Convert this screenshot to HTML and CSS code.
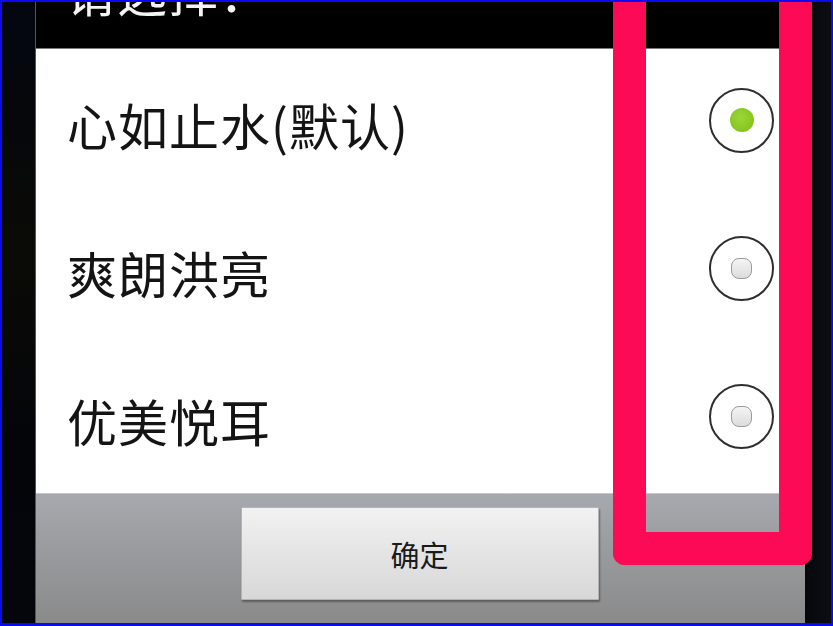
FILE: index.html
```html
<!DOCTYPE html>
<html lang="zh-CN">
<head>
<meta charset="utf-8">
<title>请选择</title>
<link rel="stylesheet" href="styles.css">
</head>
<body>
<div class="screen">
  <div class="side side-left"></div>
  <div class="dialog">
    <div class="title-bar"><div class="title">请选择：</div></div>
    <div class="list">
      <div class="item">
        <span class="label">心如止水(默认)</span>
        <span class="radio checked"><span class="dot"></span></span>
      </div>
      <div class="item">
        <span class="label">爽朗洪亮</span>
        <span class="radio"><span class="dot"></span></span>
      </div>
      <div class="item">
        <span class="label">优美悦耳</span>
        <span class="radio"><span class="dot"></span></span>
      </div>
    </div>
    <div class="actions">
      <button class="ok">确定</button>
    </div>
  </div>
  <div class="side side-right"></div>
  <div class="highlight"></div>
</div>
</body>
</html>
```
FILE: styles.css
```css
html, body {
  margin: 0;
  padding: 0;
  background: #0000ee;
}
.screen {
  position: relative;
  width: 829px;
  height: 621px;
  border-style: solid;
  border-color: #0a0af0;
  border-width: 2px 2px 3px 2px;
  background: #000;
  display: flex;
  overflow: hidden;
  font-family: "Noto Sans CJK SC", "Noto Sans", sans-serif;
}
.side-left {
  width: 33px;
  background: linear-gradient(180deg, #030610 0%, #06070a 20%, #0a0b06 40%, #040509 70%, #05060c 100%);
}
.side-right {
  width: 26px;
  background: linear-gradient(90deg, #07080c 0%, #0c0d12 100%);
}
.dialog {
  width: 770px;
  display: flex;
  flex-direction: column;
  border-left: 1px solid #555;
  box-sizing: border-box;
}
.title-bar {
  height: 46px;
  background: #000;
  overflow: hidden;
  border-bottom: 1px solid #7a7a7a;
  padding-left: 30px;
}
.title {
  color: #f4f4f4;
  font-size: 50px;
  line-height: 50px;
  letter-spacing: 1px;
  margin-top: -37px;
}
.list {
  background: #fff;
  height: 444px;
  display: flex;
  flex-direction: column;
}
.item {
  height: 148px;
  display: flex;
  align-items: center;
  justify-content: space-between;
  padding: 0 31px 0 31px;
}
.label {
  font-size: 50px;
  color: #141414;
  margin-top: 2px;
  letter-spacing: 1px;
}
.radio {
  width: 61px;
  height: 61px;
  border: 2px solid #2e2e2e;
  border-radius: 50%;
  display: flex;
  align-items: center;
  justify-content: center;
  background: #fff;
  margin-top: -6px;
}
.radio .dot {
  width: 19px;
  height: 19px;
  border-radius: 8px;
  border: 1px solid #9a9a9a;
  background: linear-gradient(180deg, #f4f4f4 0%, #dcdcdc 100%);
}
.radio.checked .dot {
  width: 24px;
  height: 24px;
  border: none;
  border-radius: 50%;
  background: radial-gradient(circle at 45% 40%, #9bd63a 0%, #86c51f 70%, #78b418 100%);
}
.actions {
  flex: 1;
  background: linear-gradient(180deg, #a6a9ae 0%, #9a9c9f 40%, #8a8a8a 100%);
  border-top: 1px solid #c8c8c8;
  display: flex;
  justify-content: center;
  padding-top: 13px;
  box-sizing: border-box;
}
.ok {
  width: 358px;
  height: 93px;
  margin-left: -2px;
  border: 1px solid #b4b4b4;
  border-radius: 1px;
  background: linear-gradient(180deg, #f2f2f2 0%, #e4e4e4 50%, #d8d8d8 100%);
  box-shadow: 1px 2px 2px rgba(0,0,0,0.35);
  font-family: "Noto Sans CJK SC", "Noto Sans", sans-serif;
  font-size: 29px;
  color: #1a1a1a;
  padding: 0;
}
.highlight {
  position: absolute;
  left: 611px;
  top: -20px;
  width: 199px;
  height: 583px;
  box-sizing: border-box;
  border: 33px solid #fc0a55;
  border-top: none;
  border-radius: 0 0 12px 12px;
}
```
